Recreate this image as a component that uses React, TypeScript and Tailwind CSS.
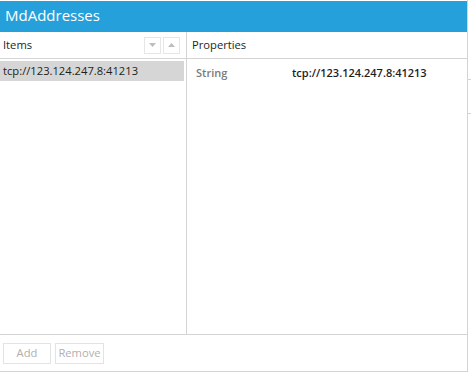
import React from "react";

export default function App() {
  const font = { fontFamily: '"Open Sans", "Noto Sans", sans-serif' };
  return (
    <div className="w-[471px] h-[376px] bg-white relative overflow-hidden" style={font}>
      <div className="w-[468px] h-[372px] flex flex-col border-r border-b border-[#d4d4d4]">
        <div className="h-[31px] mt-[1px] bg-[#26a0da] text-white text-[15px] leading-[29px] pl-[5px] shrink-0">
          MdAddresses
        </div>
        <div className="flex flex-1 min-h-0">
          <div className="w-[187px] border-r border-[#d4d4d4] flex flex-col shrink-0">
            <div className="h-[27px] border-b border-[#d4d4d4] flex items-center pl-[3px] pr-[6px] shrink-0">
              <span className="text-[11.2px] text-[#1e1e1e] flex-1">Items</span>
              <div className="w-[17px] h-[17px] border border-[#e6e6e6] flex items-center justify-center">
                <svg width="7" height="4" viewBox="0 0 7 4"><path d="M0 0h7L3.5 4z" fill="#bdbdbd" /></svg>
              </div>
              <div className="w-[17px] h-[17px] border border-[#e6e6e6] flex items-center justify-center ml-[2px]">
                <svg width="7" height="4" viewBox="0 0 7 4"><path d="M0 4h7L3.5 0z" fill="#bdbdbd" /></svg>
              </div>
            </div>
            <div className="pt-[2px] pr-[2px]">
              <div className="h-[20px] bg-[#d6d6d6] text-[11.2px] text-[#1e1e1e] leading-[20px] pl-[3px]">
                tcp://123.124.247.8:41213
              </div>
            </div>
          </div>
          <div className="flex-1 flex flex-col">
            <div className="h-[27px] border-b border-[#d4d4d4] flex items-center pl-[5px] shrink-0">
              <span className="text-[11.2px] text-[#1e1e1e]">Properties</span>
            </div>
            <div className="flex items-center h-[28px] text-[11px] font-semibold">
              <span className="w-[105px] pl-[9px] text-[#7a7a7a]">String</span>
              <span className="text-[#1e1e1e]">tcp://123.124.247.8:41213</span>
            </div>
          </div>
        </div>
        <div className="h-[37px] border-t border-[#d4d4d4] flex items-center gap-[4px] pl-[3px] shrink-0">
          <div className="w-[48px] h-[21px] border border-[#e3e3e3] text-[11.2px] text-[#b0b0b0] flex items-center justify-center">Add</div>
          <div className="w-[49px] h-[21px] border border-[#e3e3e3] text-[11.2px] text-[#b0b0b0] flex items-center justify-center">Remove</div>
        </div>
      </div>
      <div className="absolute left-[468px] top-[79px] w-[3px] h-[1px] bg-[#d4d4d4]" />
      <div className="absolute left-[468px] top-[113px] w-[3px] h-[1px] bg-[#d4d4d4]" />
    </div>
  );
}
